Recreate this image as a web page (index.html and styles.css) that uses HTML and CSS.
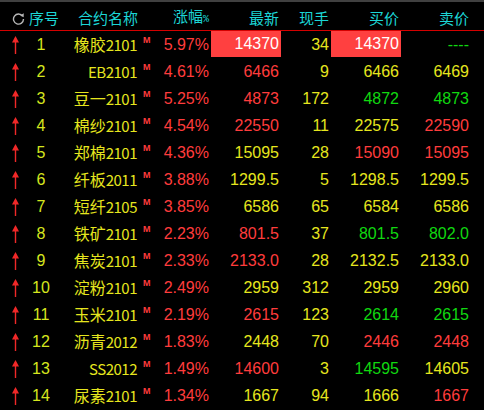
FILE: index.html
```html
<!DOCTYPE html>
<html lang="zh">
<head>
<meta charset="utf-8">
<title>行情</title>
<link rel="stylesheet" href="styles.css">
</head>
<body>
<div class="board">
  <div class="head">
    <div class="hc icon-cell">
      <svg class="refresh" width="13" height="13" viewBox="0 0 13 13">
        <path d="M10.6 4.2 A5 5 0 1 0 11.5 7" fill="none" stroke="#b8b8b8" stroke-width="1.4"/>
        <path d="M8.2 3.6 L11.6 5.2 L11.8 1.2 Z" fill="#b8b8b8"/>
      </svg>
    </div>
    <div class="hc center">序号</div>
    <div class="hc name-h">合约名称</div>
    <div class="hc">涨幅<span class="pct">%</span></div>
    <div class="hc">最新</div>
    <div class="hc">现手</div>
    <div class="hc">买价</div>
    <div class="hc">卖价</div>
    <div></div>
  </div>
  <div class="rows" id="rows"></div>
</div>
<script>
const data = [
  ["1","橡胶","2101","5.97%",["14370","box"],"34",["14370","box"],["----","g"]],
  ["2","","EB2101","4.61%",["6466","r"],"9",["6466","y"],["6469","y"]],
  ["3","豆一","2101","5.25%",["4873","r"],"172",["4872","g"],["4873","g"]],
  ["4","棉纱","2101","4.54%",["22550","r"],"11",["22575","y"],["22590","r"]],
  ["5","郑棉","2101","4.36%",["15095","y"],"28",["15090","r"],["15095","r"]],
  ["6","纤板","2011","3.88%",["1299.5","y"],"5",["1298.5","y"],["1299.5","y"]],
  ["7","短纤","2105","3.85%",["6586","y"],"65",["6584","y"],["6586","y"]],
  ["8","铁矿","2101","2.23%",["801.5","r"],"37",["801.5","g"],["802.0","g"]],
  ["9","焦炭","2101","2.33%",["2133.0","r"],"28",["2132.5","y"],["2133.0","y"]],
  ["10","淀粉","2101","2.49%",["2959","y"],"312",["2959","y"],["2960","y"]],
  ["11","玉米","2101","2.19%",["2615","r"],"123",["2614","g"],["2615","g"]],
  ["12","沥青","2012","1.83%",["2448","y"],"70",["2446","r"],["2448","r"]],
  ["13","","SS2012","1.49%",["14600","r"],"3",["14595","g"],["14605","y"]],
  ["14","尿素","2101","1.34%",["1667","y"],"94",["1666","y"],["1667","r"]]
];
const arrow = '<svg width="7" height="18" viewBox="0 0 7 18"><path d="M3.5 0 L7 6.5 L4.2 6.5 L4.2 18 L2.8 18 L2.8 6.5 L0 6.5 Z" fill="#f02828"/></svg>';
const rows = document.getElementById('rows');
let html = '';
for (const d of data) {
  const cell = (v) => '<div class="c ' + v[1] + '">' + v[0] + '</div>';
  html += '<div class="row">' +
    '<div class="arrow">' + arrow + '</div>' +
    '<div class="seq">' + d[0] + '</div>' +
    '<div class="name"><span class="cn">' + d[1] + '</span><span class="code">' + d[2] + '</span><span class="m">M</span></div>' +
    '<div class="c r">' + d[3] + '</div>' +
    cell(d[4]) +
    '<div class="c y">' + d[5] + '</div>' +
    cell(d[6]) + cell(d[7]) + '<div></div></div>';
}
rows.innerHTML = html;
</script>
</body>
</html>
```
FILE: styles.css
```css
html, body {
  margin: 0;
  padding: 0;
  background: #000;
}
body {
  width: 484px;
  height: 410px;
  overflow: hidden;
  font-family: "Liberation Sans", "Noto Sans CJK SC", sans-serif;
}
.board {
  display: flex;
  flex-direction: column;
}
.head, .row {
  display: grid;
  grid-template-columns: 29px 24px 103px 55px 70px 50px 70px 70px 13px;
}
.head {
  height: 28px;
  border-top: 2px solid #404040;
  border-bottom: 1px solid #d40000;
  align-items: center;
}
.hc {
  color: #1cd6d6;
  font-family: "Noto Sans CJK SC", sans-serif;
  font-size: 15px;
  text-align: right;
  padding-right: 2px;
  line-height: 28px;
  white-space: nowrap;
}
.hc .pct {
  font-family: "Liberation Mono", monospace;
  font-size: 10px;
}
.hc.center {
  text-align: center;
  padding-right: 0;
}
.hc.name-h {
  padding-right: 18px;
}
.icon-cell {
  display: flex;
  align-items: center;
  justify-content: flex-start;
  padding-left: 12px;
  padding-right: 0;
}
.refresh {
  display: block;
}
.row {
  height: 27px;
  align-items: center;
}
.arrow {
  display: flex;
  justify-content: center;
  padding-left: 1px;
}
.arrow svg {
  display: block;
}
.seq {
  text-align: center;
  color: #d6e61e;
  font-size: 16px;
}
.name {
  display: flex;
  justify-content: flex-end;
  align-items: baseline;
  color: #e6e61e;
  white-space: nowrap;
  height: 27px;
  line-height: 27px;
}
.name .cn {
  font-family: "Noto Sans CJK SC", sans-serif;
  font-size: 16px;
}
.name .code {
  font-family: "Noto Sans CJK SC", sans-serif;
  font-size: 15px;
  letter-spacing: -0.5px;
}
.name .m {
  align-self: flex-start;
  color: #ff3c3c;
  font-family: "Liberation Sans", sans-serif;
  font-size: 9px;
  font-weight: bold;
  width: 13px;
  padding-left: 6px;
  margin-top: 4px;
  line-height: 10px;
}
.c {
  text-align: right;
  padding-right: 2px;
  font-size: 16px;
  white-space: nowrap;
  line-height: 26px;
}
.r { color: #ff3c3c; }
.y { color: #e6e61e; }
.g { color: #10d810; }
.box {
  background: #ff4040;
  color: #fff;
  align-self: start;
  height: 26px;
}
```
